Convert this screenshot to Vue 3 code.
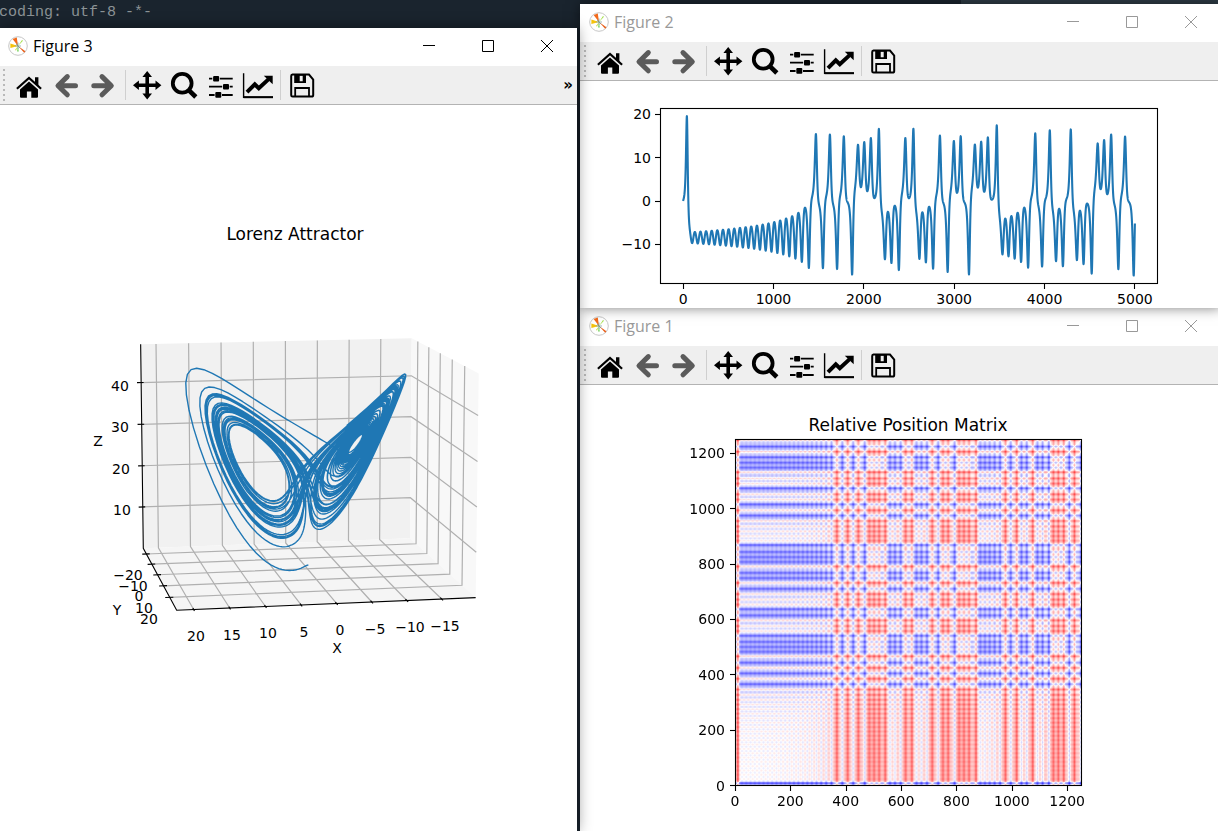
<script setup>
import { ref, onMounted } from 'vue'

/* ---------- Lorenz system ---------- */
const STEPS = 5000
const DT = 0.01
const BETA = 8 / 3

/* one Runge-Kutta step, in place: s = [x, y, z] */
function step(s) {
  const [x, y, z] = s
  const h = DT / 2
  const ax = 10 * (y - x), ay = x * (28 - z) - y, az = x * y - BETA * z
  const x1 = x + ax * h, y1 = y + ay * h, z1 = z + az * h
  const bx = 10 * (y1 - x1), by = x1 * (28 - z1) - y1, bz = x1 * y1 - BETA * z1
  const x2 = x + bx * h, y2 = y + by * h, z2 = z + bz * h
  const cx = 10 * (y2 - x2), cy = x2 * (28 - z2) - y2, cz = x2 * y2 - BETA * z2
  const x3 = x + cx * DT, y3 = y + cy * DT, z3 = z + cz * DT
  const dx = 10 * (y3 - x3), dy = x3 * (28 - z3) - y3, dz = x3 * y3 - BETA * z3
  s[0] = x + ((ax + 2 * bx + 2 * cx + dx) * DT) / 6
  s[1] = y + ((ay + 2 * by + 2 * cy + dy) * DT) / 6
  s[2] = z + ((az + 2 * bz + 2 * cz + dz) * DT) / 6
}

/* Turning points of x that keep the chaotic run on one course: [step, value, +1 max / -1 min] */
const turns = [
  [1345, -1.3, 1], [1390, -15.3, -1], [1467, 15.5, 1], [1545, -15.3, -1], [1622, 15.5, 1], [1703, -15.5, -1],
  [1777, 15, 1], [1869, -16.8, -1], [1936, 13, 1], [1965, 3.15, -1], [2006, 13.7, 1], [2039, 2.4, -1],
  [2076, 14.5, 1], [2116, 0.8, -1], [2168, 16.7, 1], [2234, -13.2, -1], [2268, -2.3, 1], [2308, -14.2, -1],
  [2341, -0.9, 1], [2386, -15.8, -1], [2459, 14.6, 1], [2500, 0.8, -1], [2548, 16.7, 1], [2614, -13.2, -1],
  [2648, -2.5, 1], [2688, -14.1, -1], [2725, -1.15, 1], [2766, -15.5, -1], [2843, 15.2, 1], [2928, -16.2, -1],
  [2994, 13.9, 1], [3031, 1.9, -1], [3072, 15, 1], [3164, -16.8, -1], [3227, 13.2, 1], [3264, 3.15, -1],
  [3297, 13.8, 1], [3334, 2.15, -1], [3374, 14.8, 1], [3419, 0.46, -1], [3470, 17.5, 1], [3533, -12.2, -1],
  [3566, -3.85, 1], [3599, -12.6, -1], [3633, -3.3, 1], [3669, -13.2, -1], [3703, -2.55, 1], [3740, -14.1, -1],
  [3776, -1.3, 1], [3817, -15.2, -1], [3898, 15.6, 1], [3976, -14.9, -1], [4057, 16.4, 1], [4127, -13.8, -1],
  [4160, -1.7, 1], [4204, -14.9, -1], [4289, 16.7, 1], [4359, -13.5, -1], [4392, -2.1, 1], [4433, -14.5, -1],
  [4474, -0.4, 1], [4522, -16.6, -1], [4588, 13.4, 1], [4621, 2.8, -1], [4658, 14.2, 1], [4695, 1.6, -1],
  [4736, 15.5, 1], [4817, -15.5, -1], [4891, 15, 1], [4987, -17, -1],
]
const trial = new Float64Array(1400)
function misfit(start, from, length, dy, dz) {
  const s = [start[0], start[1] + dy, start[2] + dz]
  for (let i = 0; i < length; i++) {
    trial[i] = s[0]
    step(s)
  }
  let cost = dy * dy + dz * dz
  for (const [at, value, sign] of turns) {
    if (at - 9 < from || at + 9 >= from + length) continue
    let best = -Infinity
    let lag = 0
    for (let k = -9; k <= 9; k++) {
      const v = sign * trial[at + k - from]
      if (v > best) { best = v; lag = k }
    }
    cost += (best - sign * value) ** 2 + (lag / 5) ** 2
  }
  return cost
}
function steer(s, from, length) {
  let best = [misfit(s, from, length, 0, 0), 0, 0]
  for (const [range, cells] of [[0.4, 12], [0.04, 6], [0.008, 5]]) {
    const [, y0, z0] = best
    for (let i = -cells; i <= cells; i++) {
      for (let j = -cells; j <= cells; j++) {
        const dy = y0 + (range * i) / cells
        const dz = z0 + (range * j) / cells
        const cost = misfit(s, from, length, dy, dz)
        if (cost < best[0]) best = [cost, dy, dz]
      }
    }
  }
  s[1] += best[1]
  s[2] += best[2]
}
const states = []
const current = [0, 1, 1.05]
for (let i = 0; i <= STEPS; i++) {
  if (i === 700) steer(current, i, 960)
  if (i >= 1200 && i % 150 === 0 && i < 4900) steer(current, i, Math.min(430, STEPS + 1 - i))
  states.push([...current])
  step(current)
}
const series = states.map((s) => s[0])

/* ---------- Figure 2: time series ---------- */
const tx = (i) => 103.1 + i * 0.09036
const ty = (v) => 120 - v * 4.33
const seriesPoints = series.map((v, i) => `${tx(i).toFixed(2)},${ty(v).toFixed(2)}`).join(' ')
const timeTicks = [0, 1000, 2000, 3000, 4000, 5000]
const valueTicks = [20, 10, 0, -10]
const label = (v) => String(v).replace('-', '\u2212')

/* ---------- Figure 3: perspective view ---------- */
const box = { x: [22.35, -19.9], y: [-25.8, 30.7], z: [-0.1, 49.1] }
const unit = (v, [from, to]) => (v - from) / (to - from)
function cube(a, b, c) {
  const d = 1 + 0.0205 * a - 0.1125 * b - 0.016 * c
  const u = 143.3 + 275.1 * a + 13.5 * b - 4.9 * c
  const v = 548.3 + 1 * a - 6.7 * b - 209.5 * c
  return `${(u / d).toFixed(2)},${(v / d - 105).toFixed(2)}`
}
const path = (...pts) => pts.map((p) => cube(...p)).join(' ')
const panes = [
  { id: 'back', points: path([0, 0, 0], [1, 0, 0], [1, 0, 1], [0, 0, 1]) },
  { id: 'side', points: path([1, 0, 0], [1, 1, 0], [1, 1, 1], [1, 0, 1]) },
  { id: 'floor', points: path([0, 0, 0], [1, 0, 0], [1, 1, 0], [0, 1, 0]) },
]
const gridLines = []
const tickLines = []
for (const v of [20, 15, 10, 5, 0, -5, -10, -15]) {
  const a = unit(v, box.x)
  gridLines.push(path([a, 0, 1], [a, 0, 0], [a, 1, 0]))
  tickLines.push(path([a, 0.98, 0], [a, 1.02, 0]))
}
for (const v of [-20, -10, 0, 10, 20]) {
  const b = unit(v, box.y)
  gridLines.push(path([0, b, 0], [1, b, 0], [1, b, 1]))
  tickLines.push(path([-0.015, b, 0], [0.012, b, 0]))
}
for (const v of [10, 20, 30, 40]) {
  const c = unit(v, box.z)
  gridLines.push(path([0, 0, c], [1, 0, c], [1, 1, c]))
  tickLines.push(path([-0.015, 0, c], [0.009, 0, c]))
}
const axisLine = path([0, 0, 1], [0, 0, 0], [0, 1, 0], [1, 1, 0])
const orbit = states
  .map(([x, y, z]) => cube(unit(x, box.x), unit(y, box.y), unit(z, box.z)))
  .join(' ')
const labels3d = [
  ['40', 120, 286], ['30', 120, 327], ['20', 121, 369], ['10', 122, 410], ['Z', 98, 341],
  ['−20', 128, 475], ['−10', 133, 486], ['0', 139, 496], ['10', 144, 508], ['20', 149, 519], ['Y', 117, 510],
  ['20', 196, 536], ['15', 232, 535], ['10', 268, 533], ['5', 304, 532], ['0', 340, 530],
  ['−5', 375, 529], ['−10', 410, 527], ['−15', 445, 526], ['X', 337, 548],
]

/* ---------- Figure 1: relative position matrix ---------- */
const matrixTicks = [0, 200, 400, 600, 800, 1000, 1200]
const mscale = 346 / 1250
const heat = ref([])

onMounted(() => {
  const size = 346
  const n = 1250
  const paa = Array.from({ length: n }, (_, i) =>
    (series[4 * i] + series[4 * i + 1] + series[4 * i + 2] + series[4 * i + 3]) / 4)
  const span = Math.max(...paa) - Math.min(...paa)
  const ratio = n / size
  const level = Array.from({ length: size }, (_, p) => {
    const mid = (p + 0.5) * ratio - 0.5
    let sum = 0
    let weight = 0
    for (let k = Math.ceil(mid - ratio); k <= mid + ratio; k++) {
      if (k < 0 || k >= n) continue
      const w = 0.5 + 0.5 * Math.cos((Math.PI * (k - mid)) / ratio)
      sum += w * paa[k]
      weight += w
    }
    return sum / weight
  })
  const ctx = heat.value[0].getContext('2d')
  const img = ctx.createImageData(size, size)
  for (let r = 0; r < size; r++) {
    for (let c = 0; c < size; c++) {
      const v = (level[c] - level[size - 1 - r]) / span
      const fade = 255 * (1 - Math.abs(v))
      const o = 4 * (r * size + c)
      img.data[o] = v > 0 ? 255 : fade
      img.data[o + 1] = fade
      img.data[o + 2] = v > 0 ? fade : 255
      img.data[o + 3] = 255
    }
  }
  ctx.putImageData(img, 0, 0)
})

const figures = [
  { id: 3, active: true },
  { id: 2, active: false },
  { id: 1, active: false },
]
const tools = ['Home', 'Back', 'Forward', '|', 'Pan', 'Zoom', 'Subplots', 'Customize', '|', 'Save']
</script>

<template>
  <main class="desktop">
    <div class="editor">coding: utf-8 -*-</div>
    <section v-for="f in figures" :key="f.id" :class="['window', 'fig' + f.id, { active: f.active }]">
      <header class="titlebar">
        <svg class="logo" viewBox="0 0 20 20" aria-hidden="true">
          <circle cx="10" cy="10" r="9.3" fill="#fff" stroke="#c6c6c6" />
          <path d="M10 10 4.6 2.9 8.8 1.4z" fill="#f26a1b" />
          <path d="M10 10 2.4 12V7.4z" fill="#f4c20d" />
          <path d="M10 10 14 4l1 .8z" fill="#a5e04b" />
          <path d="M10 10 10.8 15.5H9z" fill="#7fd66a" />
          <path d="M10 10 7 14 8 14.5z" fill="#c3dc3a" />
          <path d="M10 10 17.4 15.3 16.2 16.7z" fill="#e8601c" />
          <path d="M10 6.5V13M7 10h6M8 8l4 4" stroke="#5f8a8a" stroke-width=".6" />
        </svg>
        <h1>Figure {{ f.id }}</h1>
        <div class="controls">
          <button aria-label="Minimize"><svg viewBox="0 0 14 14"><path d="M1 6.5h12" /></svg></button>
          <button aria-label="Maximize"><svg viewBox="0 0 14 14"><path d="M1.5 1.5h11v11h-11z" /></svg></button>
          <button aria-label="Close"><svg viewBox="0 0 14 14"><path d="M1 1l12 12M13 1 1 13" /></svg></button>
        </div>
      </header>
      <nav class="toolbar">
        <i class="grip"></i>
        <template v-for="(t, k) in tools" :key="k">
          <i v-if="t === '|'" class="sep"></i>
          <button v-else :aria-label="t">
            <svg viewBox="0 0 37 38">
              <g v-if="t === 'Home'">
                <path d="M25 11.3h3.4v9L25 17.2z" />
                <path d="M6.9 22.8 19 12 31.1 22.8" fill="none" stroke="#000" stroke-width="2.2" />
                <path d="M10 23.4 19 15.5 28 23.4V30.7a1 1 0 0 1-1 1H21.3V25.6H16.9V31.7H11a1 1 0 0 1-1-1z" />
              </g>
              <path v-else-if="t === 'Back'" class="arrow" d="M20.3 10.6 11 19.7 20.3 28.8M12 19.7H28.5" />
              <path v-else-if="t === 'Forward'" class="arrow" d="M18 10.6 27.3 19.7 18 28.8M9.8 19.7H26.3" />
              <g v-else-if="t === 'Pan'">
                <path d="M19.2 8v22.6M7.9 19.3h22.6" fill="none" stroke="#000" stroke-width="3.6" />
                <path d="M19.2 5.1 24 11H14.4zM19.2 33.5 14.4 27.6H24zM5 19.3 10.9 14.5v9.6zM33.4 19.3 27.5 24.1v-9.6z" />
              </g>
              <g v-else-if="t === 'Zoom'" fill="none" stroke="#000">
                <circle cx="17.2" cy="17.2" r="9.4" stroke-width="3.8" />
                <path d="M23.5 23.8 30.8 31" stroke-width="4.6" />
              </g>
              <g v-else-if="t === 'Subplots'">
                <path d="M7 12.7h3.3M17.8 12.7h12.9M7 20.7h13.2M27.7 20.7h3M7 29h5.6M20 29h10.7" stroke="#000" stroke-width="1.8" />
                <rect x="11.1" y="9.9" width="6" height="5.7" rx="1" />
                <rect x="21" y="17.9" width="6" height="5.7" rx="1" />
                <rect x="13.3" y="26.1" width="6" height="5.7" rx="1" />
              </g>
              <g v-else-if="t === 'Customize'">
                <path d="M4.6 7.3V31.3H34" fill="none" stroke="#000" stroke-width="1.4" />
                <path d="M4.6 31.2H34" stroke="#000" stroke-width="2" />
                <path d="M8 26.2 15.8 18.4 19.8 22.2 29.4 13.4" fill="none" stroke="#000" stroke-width="4" />
                <path d="M24.8 9.8h8.9v8.4z" />
              </g>
              <g v-else>
                <path d="M9.5 8.6H26l4.2 5V29a1.6 1.6 0 0 1-1.6 1.6H9.6A1.4 1.4 0 0 1 8.2 29.2V10A1.4 1.4 0 0 1 9.5 8.6z" fill="none" stroke="#000" stroke-width="2" />
                <path d="M11.2 8h11.8v9H11.2zM16.7 9.7v5.6h3V9.7z" fill-rule="evenodd" />
                <path d="M12.2 30.5V22H26v8.5" fill="none" stroke="#000" stroke-width="1.8" />
              </g>
            </svg>
          </button>
        </template>
        <button v-if="f.active" class="more" aria-label="More tools">»</button>
      </nav>

      <svg v-if="f.id === 3" class="plot" viewBox="0 0 577 726">
        <text class="title" x="295" y="135">Lorenz Attractor</text>
        <polygon v-for="p in panes" :key="p.id" :class="p.id" :points="p.points" />
        <polyline v-for="(g, i) in gridLines" :key="'g' + i" class="grid" :points="g" />
        <polyline class="axis" :points="axisLine" />
        <polyline v-for="(g, i) in tickLines" :key="'t' + i" class="axis" :points="g" />
        <polyline class="orbit" :points="orbit" />
        <text v-for="([t, x, y], i) in labels3d" :key="i" :x="x" :y="y">{{ t }}</text>
      </svg>

      <svg v-else-if="f.id === 2" class="plot" viewBox="0 0 641 227">
        <polyline class="series" :points="seriesPoints" />
        <rect class="axis" x="80.5" y="27.5" width="497" height="175" />
        <g v-for="t in timeTicks" :key="t">
          <path class="axis" :d="`M${Math.floor(tx(t)) + 0.5} 203v5`" />
          <text :x="tx(t)" y="223">{{ t }}</text>
        </g>
        <g v-for="t in valueTicks" :key="'v' + t">
          <path class="axis" :d="`M75 ${Math.floor(ty(t)) + 0.5}h5`" />
          <text class="end" x="71" :y="ty(t) + 5">{{ label(t) }}</text>
        </g>
      </svg>

      <svg v-else class="plot" viewBox="0 0 641 446">
        <text class="title" x="328" y="46">Relative Position Matrix</text>
        <foreignObject x="155" y="54" width="347" height="347">
          <canvas ref="heat" class="heat" width="346" height="346"></canvas>
        </foreignObject>
        <rect class="axis" x="155.5" y="54.5" width="346" height="346" />
        <g v-for="t in matrixTicks" :key="t">
          <path class="axis" :d="`M${Math.floor(155.5 + t * mscale) + 0.5} 401v5`" />
          <text :x="155 + t * mscale" y="421">{{ t }}</text>
          <path class="axis" :d="`M150 ${Math.floor(400.5 - t * mscale) + 0.5}h5`" />
          <text class="end" x="145" :y="405.5 - t * mscale">{{ t }}</text>
        </g>
      </svg>
    </section>
  </main>
</template>

<style>
body { background: #1a242e; overflow: hidden; }
</style>

<style scoped>
.desktop {
  display: grid;
  grid-template-columns: 577fr 641fr;
  grid-template-rows: 4px 24px 280px 1fr;
  min-height: 100vh;
  overflow: hidden;
  background: linear-gradient(90deg, transparent 961px, #2e3b45 961px) top / 100% 4px no-repeat #1a242e;
}
.editor {
  grid-area: 1 / 1 / 3 / 2;
  margin-left: -1px;
  font: 15px/26px "Liberation Mono", monospace;
  color: #8c9396;
  white-space: pre;
}
.window {
  --inset: 0px;
  --ink: #999;
  display: flex;
  flex-direction: column;
  background: #fff;
  color: var(--ink);
}
.active { --ink: #000; z-index: 2; box-shadow: 0 0 14px rgba(0, 0, 0, .45); }
.fig3 { grid-area: 3 / 1 / 5 / 2; }
.fig2, .fig1 { --inset: 1px; margin-left: 3px; margin-right: -3px; }
.fig2 { grid-area: 2 / 2 / 4 / 3; z-index: 1; box-shadow: 0 0 12px rgba(0, 0, 0, .5); }
.fig1 { grid-area: 4 / 2 / 5 / 3; }
.titlebar { display: flex; align-items: flex-start; height: 38px; padding: 0 1px 0 calc(8px + var(--inset)); }
.logo { width: 20px; height: 20px; margin-top: 8px; }
h1 { margin: 0 0 0 5px; font: 16px/36px "Open Sans", "Noto Sans", sans-serif; }
.controls { display: flex; margin-left: auto; }
button { border: 0; padding: 0; background: none; color: inherit; display: flex; align-items: center; justify-content: center; }
.controls button { width: 59px; height: 36px; }
.controls svg { width: 14px; height: 14px; fill: none; stroke: var(--ink); }
.toolbar {
  display: flex;
  height: 38px;
  padding-left: var(--inset);
  background: #efefef;
  border-bottom: 1px solid #b3b3b3;
}
.grip {
  width: 2px;
  height: 32px;
  margin: 3px 5px 0 3px;
  background: repeating-linear-gradient(#b8b8b8 0 2px, transparent 2px 5px);
}
.toolbar button { width: 37px; height: 38px; }
.toolbar button svg { width: 37px; height: 38px; }
.arrow { fill: none; stroke: #5b5b5b; stroke-width: 5; stroke-linecap: round; stroke-linejoin: round; }
.sep { width: 1px; height: 30px; margin: 4px 2px 4px 4px; background: #cfcfcf; }
.toolbar .more { width: 18px; margin-left: auto; font: bold 15px/30px "DejaVu Sans", sans-serif; color: #000; }
.plot { display: block; width: 100%; height: auto; font: 14px "DejaVu Sans", sans-serif; fill: #000; }
.plot text { text-anchor: middle; }
.plot .end { text-anchor: end; }
.plot .title { font-size: 17px; }
.heat { display: block; width: 347px; height: 347px; }
.axis { fill: none; stroke: #000; stroke-width: 1.1; }
.grid { fill: none; stroke: #b0b0b0; stroke-width: 1.2; }
.back { fill: #f1f1f1; }
.side { fill: #f8f8f8; }
.floor { fill: #f5f5f5; }
.orbit { fill: none; stroke: #1f77b4; stroke-width: 1.4; stroke-linejoin: round; }
.series { fill: none; stroke: #1f77b4; stroke-width: 2.1; stroke-linejoin: round; }
</style>
